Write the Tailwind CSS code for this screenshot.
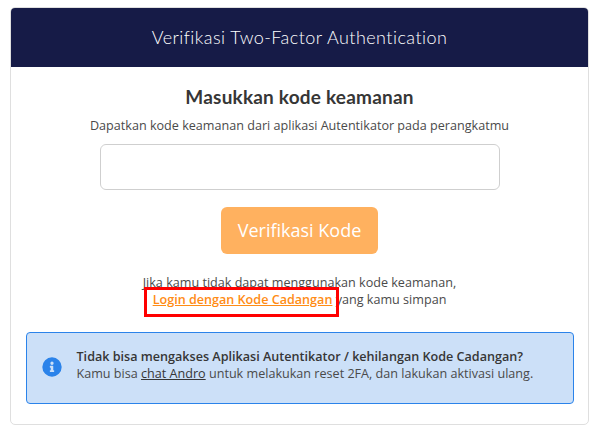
<!DOCTYPE html>
<html lang="id">
<head>
    <meta charset="UTF-8">
    <meta name="viewport" content="width=device-width, initial-scale=1.0">
    <title>Verifikasi Two-Factor Authentication</title>
    <script src="https://cdn.jsdelivr.net/npm/@tailwindcss/browser@4"></script>
</head>
<body class="bg-white h-[433px] overflow-hidden font-['Open_Sans',sans-serif] text-[#4a4a4a]">

    <div class="pt-[7px] px-[10px]">
        <div class="w-[579px] h-[418px] bg-white border border-[#dfdfdf] rounded-[5px] overflow-hidden">
            <div class="h-[59px] bg-[#161b47] flex items-center justify-center text-white text-[18px] font-['Lato',sans-serif] font-light tracking-[0.45px]">
                Verifikasi Two-Factor Authentication
            </div>

            <div class="px-[15px] pt-[19px] flex flex-col items-center">
                <h2 class="text-[19px] leading-[22px] font-bold text-[#363636] font-['Lato',sans-serif] tracking-[0.2px]">Masukkan kode keamanan</h2>
                <p class="mt-[9px] text-[12.6px] leading-[18px]">Dapatkan kode keamanan dari aplikasi Autentikator pada perangkatmu</p>
                <input type="text" class="mt-[9px] w-[400px] h-[46px] border border-[#cfcfcf] rounded-[6px] bg-white">
                <button type="button" class="mt-[17px] w-[157px] h-[47px] bg-[#ffb15f] text-white text-[18px] rounded-[6px]">Verifikasi Kode</button>

                <div class="relative mt-[20px] text-center text-[12.6px] leading-[17px]">
                    <p>Jika kamu tidak dapat menggunakan kode keamanan,</p>
                    <p><a href="#" class="text-[#ff8c14] underline font-semibold">Login dengan Kode Cadangan</a> yang kamu simpan</p>
                    <div class="absolute left-[1px] top-[13px] w-[195px] h-[30px] border-[3px] border-[#ff0000]"></div>
                </div>

                <div class="mt-[24px] w-[548px] h-[72px] bg-[#cce0f8] border border-[#2b83ea] rounded-[4px] flex pl-[15px] pt-[15px] text-[12.6px] leading-[17px]">
                    <svg class="w-[20px] h-[20px] mt-[9px] shrink-0" viewBox="0 0 512 512">
                        <path fill="#2b83ea" d="M256 8a248 248 0 1 0 0 496 248 248 0 0 0 0-496zm0 110a42 42 0 1 1 0 84 42 42 0 0 1 0-84zm56 254c0 7-5 12-12 12h-88c-7 0-12-5-12-12v-24c0-7 5-12 12-12h12v-64h-12c-7 0-12-5-12-12v-24c0-7 5-12 12-12h64c7 0 12 5 12 12v100h12c7 0 12 5 12 12v24z"/>
                    </svg>
                    <div class="ml-[15px]">
                        <p class="font-semibold text-[#363636]">Tidak bisa mengakses Aplikasi Autentikator / kehilangan Kode Cadangan?</p>
                        <p>Kamu bisa <a href="#" class="underline text-[#363636]">chat Andro</a> untuk melakukan reset 2FA, dan lakukan aktivasi ulang.</p>
                    </div>
                </div>
            </div>
        </div>
    </div>

</body>
</html>
